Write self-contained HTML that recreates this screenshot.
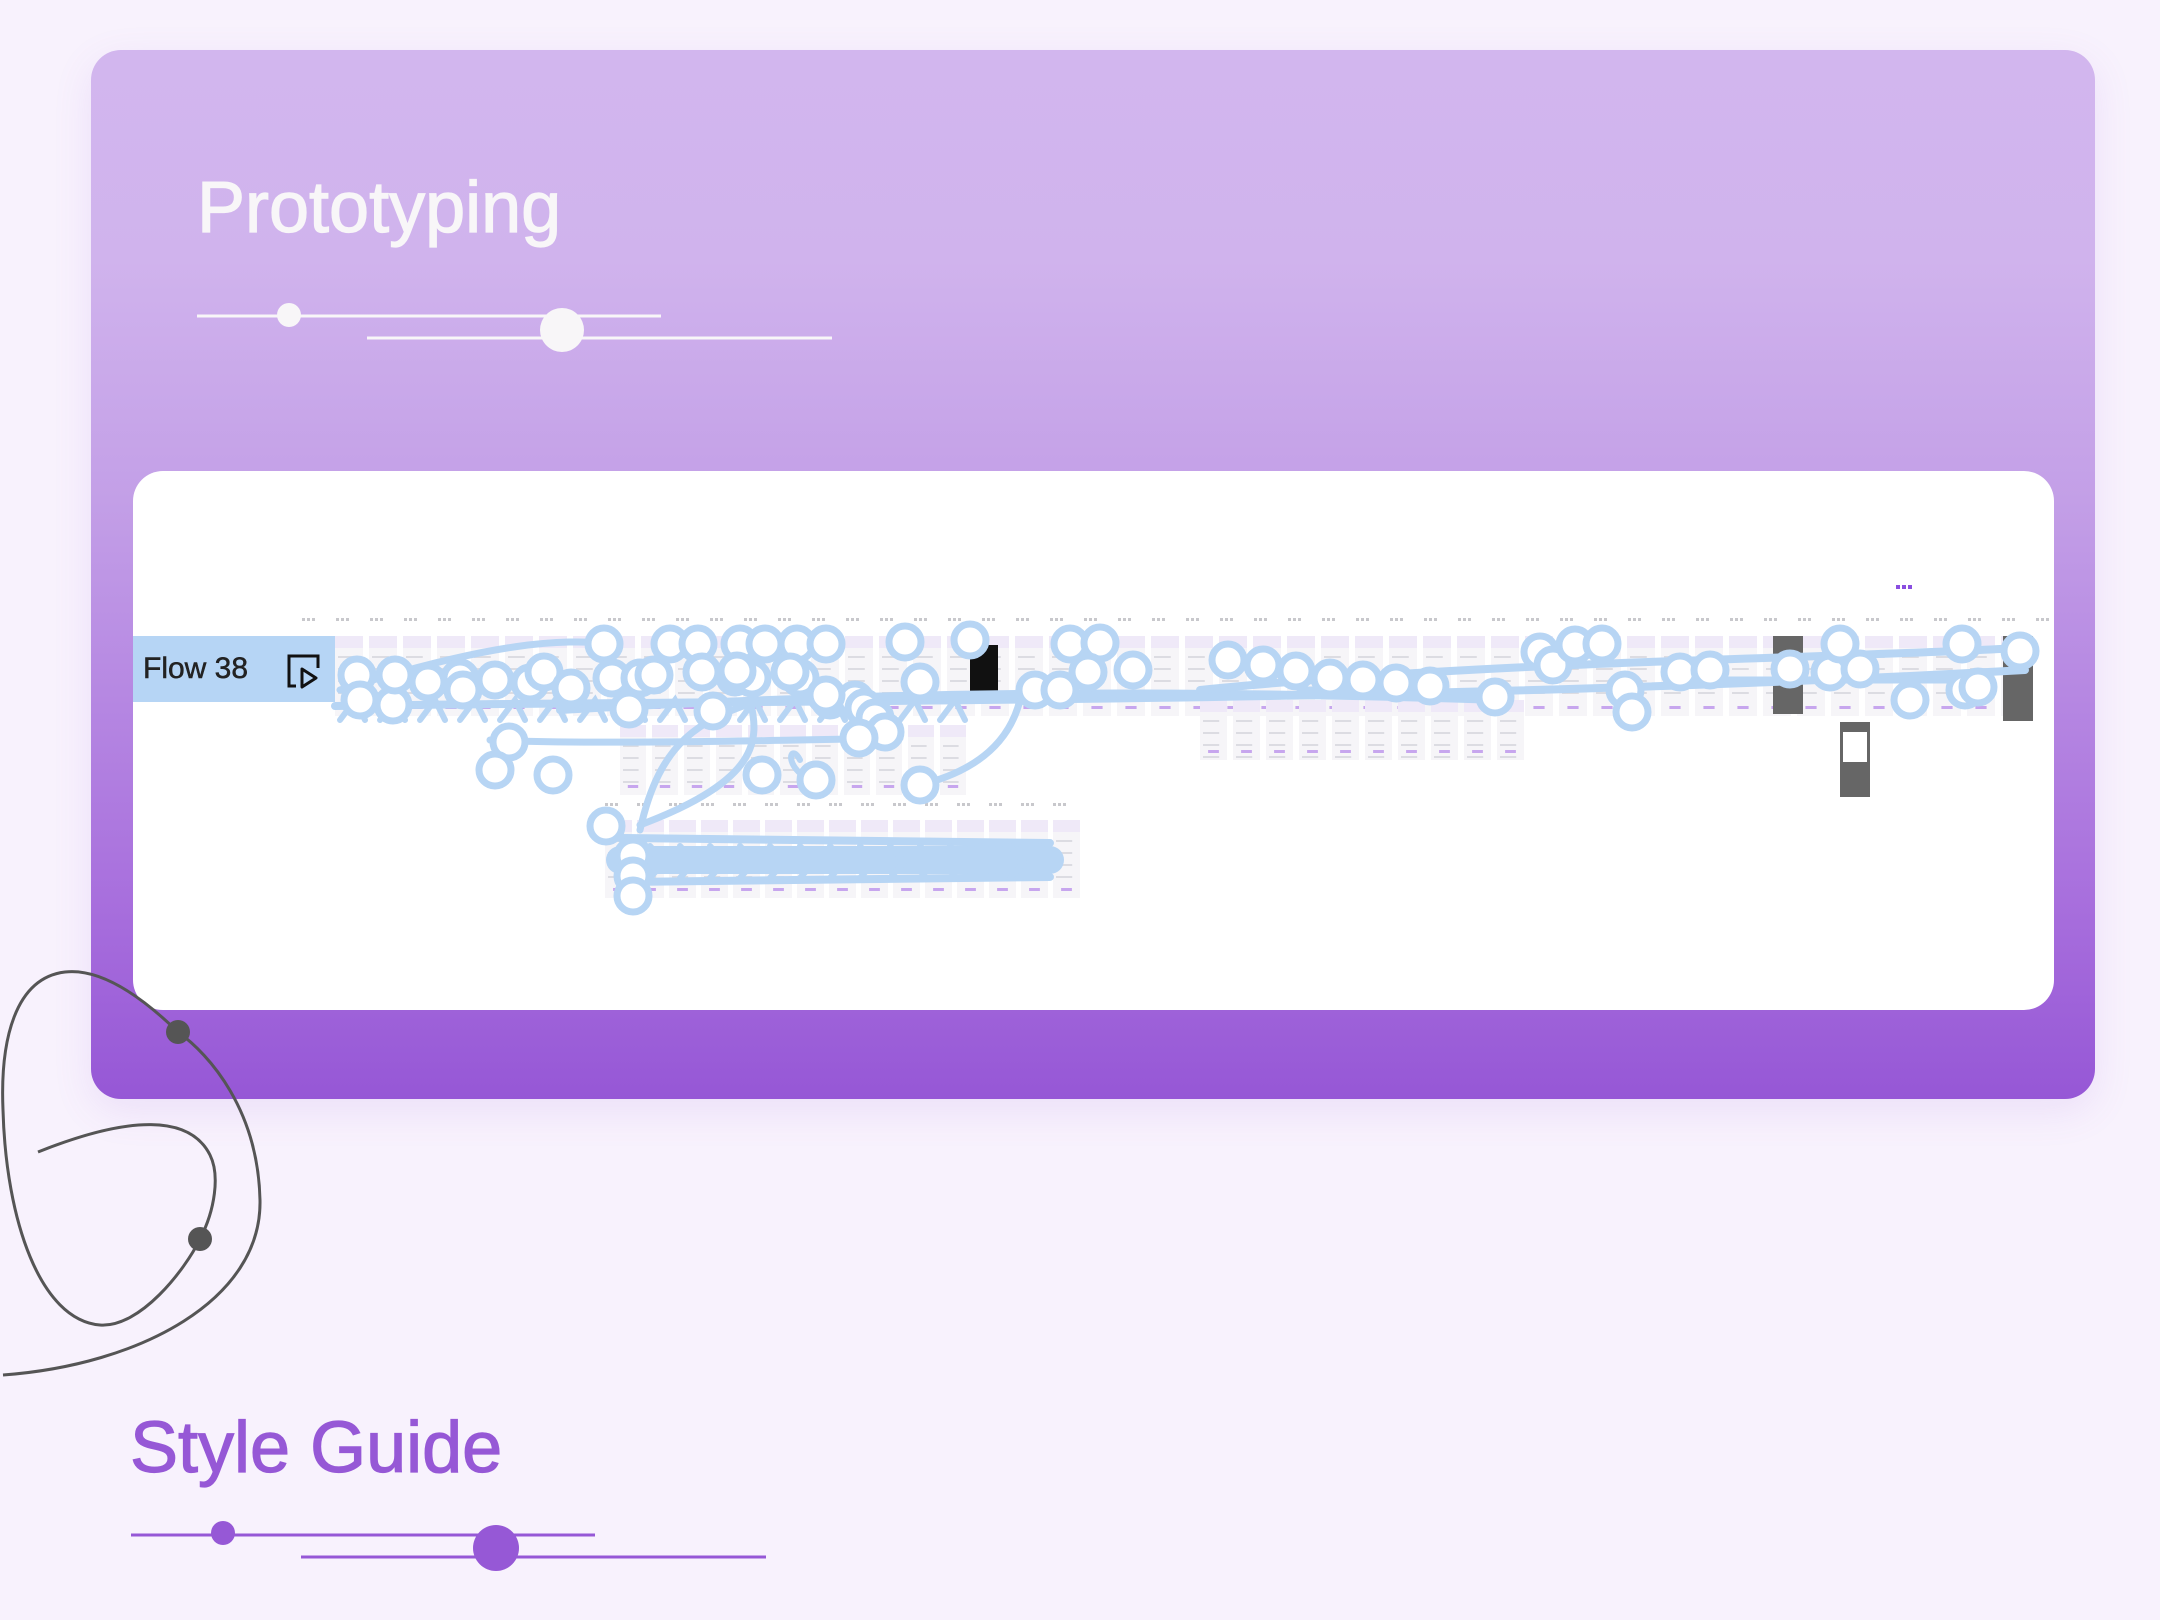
<!DOCTYPE html>
<html><head><meta charset="utf-8"><style>
html,body{margin:0;padding:0}
body{width:2160px;height:1620px;background:#f8f2fd;position:relative;overflow:hidden;font-family:"Liberation Sans",sans-serif}
.card{position:absolute;left:91px;top:50px;width:2004px;height:1049px;border-radius:30px;background:linear-gradient(180deg,#d2b6ee 0px,#d0b3ed 210px,#c39fe7 450px,#a86fdd 850px,#9657d6 1049px);box-shadow:0 12px 40px rgba(150,90,214,0.12)}
.panel{position:absolute;left:133px;top:471px;width:1921px;height:539px;background:#fff;border-radius:30px;overflow:hidden}
.t1{position:absolute;left:197px;top:166px;font-size:72px;color:#f8f6f8;line-height:84px;white-space:nowrap;-webkit-text-stroke:1.2px #f8f6f8}
.t2{position:absolute;left:130px;top:1406px;font-size:72px;color:#9658d6;line-height:84px;white-space:nowrap;-webkit-text-stroke:1.2px #9658d6}
.flow{position:absolute;left:0;top:165px;width:202px;height:66px;background:#b6d5f5;font-size:30px;color:#222;line-height:66px;padding-left:10px;box-sizing:border-box;-webkit-text-stroke:0.5px #222}
</style></head><body>
<div class="card"></div>
<div class="t1">Prototyping</div>
<svg style="position:absolute;left:0;top:0" width="2160" height="1620">
<line x1="197" y1="316" x2="661" y2="316" stroke="#f8f6f8" stroke-width="3"/>
<line x1="367" y1="338" x2="832" y2="338" stroke="#f8f6f8" stroke-width="3"/>
<circle cx="289" cy="315" r="12" fill="#f8f6f8"/>
<circle cx="562" cy="330" r="22" fill="#f8f6f8"/>
<line x1="131" y1="1535" x2="595" y2="1535" stroke="#9658d6" stroke-width="3"/>
<line x1="301" y1="1557" x2="766" y2="1557" stroke="#9658d6" stroke-width="3"/>
<circle cx="223" cy="1533" r="12" fill="#9658d6"/>
<circle cx="496" cy="1548" r="23" fill="#9658d6"/>
</svg>
<div class="panel">
<div class="flow">Flow 38
<svg style="position:absolute;left:153px;top:17px" width="36" height="36" viewBox="0 0 36 36"><path d="M10 33H3V3H32V15" fill="none" stroke="#111" stroke-width="3"/><path d="M16 16L30 25L16 34Z" fill="none" stroke="#111" stroke-width="3" stroke-linejoin="round"/></svg>
</div>
<svg id="d" style="position:absolute;left:0;top:0" width="1921" height="539"></svg>
</div>
<div class="t2">Style Guide</div>
<svg style="position:absolute;left:0;top:0" width="2160" height="1620">
<path d="M3,1375 C140,1365 262,1300 260,1200 C258,1110 210,1055 178,1032 C140,995 100,968 65,972 C15,978 0,1040 3,1110 C6,1220 40,1320 100,1325 C140,1328 185,1270 200,1239 C215,1210 220,1175 210,1155 C190,1115 130,1115 38,1152" fill="none" stroke="#555" stroke-width="3"/>
<circle cx="178" cy="1032" r="12" fill="#555"/>
<circle cx="200" cy="1239" r="12" fill="#555"/>
</svg>
<script>
(function(){
var s=document.getElementById('d'),ox=133,oy=471,h='';
function rect(x,y,w,hh,f){h+='<rect x="'+(x-ox)+'" y="'+(y-oy)+'" width="'+w+'" height="'+hh+'" fill="'+f+'"/>';}
function scr(x,y,w,hh){rect(x,y,w,hh,'#f6f5f8');rect(x,y,w,12,'#efe9f8');for(var i=0;i<4;i++)rect(x+3,y+20+i*12,w*0.6,2,'#dcdce2');rect(x+w*0.3,y+hh-10,w*0.4,3,'#c7a6ee');}
for(var x=302;x<2040;x+=34){for(var k=0;k<3;k++)rect(x+k*5,618,3,3,'#c8c8cc');}
for(var x=335;x<2035;x+=34)scr(x,636,28,80);
for(var x=620;x<950;x+=32)scr(x,725,26,70);
for(var x=1200;x<1530;x+=33)scr(x,700,27,60);
for(var x=605;x<1075;x+=32)scr(x,820,27,78);
for(var x=605;x<1075;x+=32){for(var k=0;k<3;k++)rect(x+k*5,803,3,3,'#c8c8cc');}
rect(1773,636,30,78,'#666');rect(1840,722,30,75,'#666');rect(1843,732,24,30,'#fff');rect(2003,636,30,85,'#666');rect(970,645,28,50,'#111');
for(var k=0;k<3;k++)rect(1896+k*6,585,4,4,'#8a4ee0');
var L='#b7d5f4';
function ln(d,w){h+='<path d="'+d.replace(/(-?\d+),(-?\d+)/g,function(m,a,b){return (a-ox)+','+(b-oy);})+'" fill="none" stroke="'+L+'" stroke-width="'+(w||6)+'" stroke-linecap="round"/>';}
ln('M335,706 C700,700 1400,705 2025,670',8);
ln('M340,690 C500,640 560,640 610,643',7);
ln('M560,710 C900,690 1200,690 1500,700',8);
ln('M620,860 L1050,860',28);ln('M620,838 L1050,843',8);ln('M620,882 L1050,877',8);
ln('M640,830 C660,740 700,720 760,700',7);ln('M640,825 C760,780 760,740 750,700',7);
ln('M920,785 C980,770 1010,740 1020,700',7);ln('M820,785 C780,770 790,740 800,760',6);
ln('M490,740 C600,745 800,740 900,738',7);ln('M1200,690 C1500,660 1800,660 2020,648',8);
ln('M1300,690 L1420,690',7);ln('M1700,680 L1990,680',7);
for(var x=340;x<960;x+=40)ln('M'+x+',720 L'+(x+15)+',700 L'+(x+25)+',720',6);
for(var x=650;x<1050;x+=30)ln('M'+x+',846 L'+(x+14)+',862 L'+x+',878',6);
var C=[[357,675],[360,700],[393,705],[395,675],[428,682],[460,678],[463,690],[495,680],[530,683],[544,672],[571,688],[604,644],[612,678],[640,678],[629,709],[654,675],[670,644],[698,644],[702,672],[713,711],[740,644],[735,677],[765,644],[797,644],[800,678],[826,644],[830,700],[855,700],[864,708],[875,718],[885,732],[859,738],[826,695],[790,672],[752,678],[737,671],[920,682],[905,642],[970,640],[1035,690],[1060,690],[1070,644],[1100,643],[1088,672],[1133,670],[1228,660],[1263,665],[1296,671],[1330,678],[1363,680],[1396,683],[1430,686],[1495,697],[1540,652],[1553,665],[1575,645],[1602,644],[1625,690],[1632,712],[1680,672],[1710,670],[1790,669],[1830,672],[1840,644],[1860,669],[1910,700],[1962,644],[1965,690],[1978,687],[2020,651],[816,780],[920,785],[762,775],[509,742],[495,770],[553,775],[606,826],[633,856],[633,876],[633,896]];
C.forEach(function(c){h+='<circle cx="'+(c[0]-ox)+'" cy="'+(c[1]-oy)+'" r="16" fill="#fff" stroke="'+L+'" stroke-width="7"/>';});
s.innerHTML=h;
})();
</script>
</body></html>
